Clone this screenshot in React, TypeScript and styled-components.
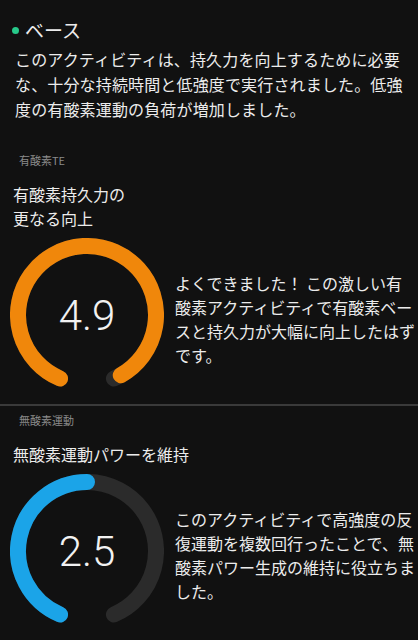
import styled, { createGlobalStyle } from "styled-components";

const GlobalStyle = createGlobalStyle`
  body {
    margin: 0;
    background: #111111;
    color: #ececec;
    font-family: "Noto Sans CJK JP", "Noto Sans", sans-serif;
  }
`;

const Page = styled.div`
  width: 418px;
  min-height: 640px;
  background: #111111;
`;

const Summary = styled.section`
  padding: 16px 10px 0 12px;
`;

const Heading = styled.h2`
  display: flex;
  align-items: center;
  gap: 6px;
  margin: 0;
  font-size: 19px;
  font-weight: 400;
  line-height: 28px;
`;

const Dot = styled.span`
  width: 7px;
  height: 7px;
  border-radius: 50%;
  background: #27c98a;
`;

const SummaryText = styled.p`
  margin: 3px 0 0 3px;
  font-size: 16px;
  line-height: 25px;
  letter-spacing: 0.15px;
`;

const Section = styled.section`
  padding-top: ${(p: { $top: number }) => p.$top}px;
`;

const Label = styled.div`
  padding-left: 19px;
  font-size: 11px;
  line-height: 16px;
  color: #8a8a8a;
`;

const Title = styled.div`
  margin-top: 14px;
  padding-left: 13px;
  font-size: 16px;
  line-height: 24px;
  white-space: pre-line;
`;

const Row = styled.div`
  display: flex;
  align-items: center;
  gap: 11px;
  margin-top: 8px;
  padding-left: 10px;
`;

const GaugeBox = styled.div`
  display: grid;
  place-items: center;
  width: 154px;
  height: 154px;
  flex: none;

  & > * {
    grid-area: 1 / 1;
  }
`;

const Value = styled.span`
  font-family: Roboto, "Liberation Sans", sans-serif;
  font-weight: 300;
  font-size: 42px;
  color: #f2f2f2;
`;

const Note = styled.p`
  margin: 0;
  padding-top: 8px;
  width: 243px;
  font-size: 16px;
  line-height: 24px;
`;

const Divider = styled.div`
  height: 2px;
  margin-top: 12px;
  background: #3a3a3a;
`;

const SIZE = 154;
const C = SIZE / 2;
const R = 69;
const GAP = 23;
const SWEEP = 360 - GAP * 2;

const point = (deg: number) => {
  const a = (deg * Math.PI) / 180;
  return [C + R * Math.sin(a), C - R * Math.cos(a)];
};

const arc = (from: number, to: number) => {
  const [x1, y1] = point(from);
  const [x2, y2] = point(to);
  const large = to - from > 180 ? 1 : 0;
  return `M ${x1.toFixed(2)} ${y1.toFixed(2)} A ${R} ${R} 0 ${large} 1 ${x2.toFixed(2)} ${y2.toFixed(2)}`;
};

const Gauge = ({ value, max, color }: { value: number; max: number; color: string }) => {
  const start = 180 + GAP;
  const end = start + (SWEEP * value) / max;
  return (
    <GaugeBox>
      <svg width={SIZE} height={SIZE} viewBox={`0 0 ${SIZE} ${SIZE}`}>
        <path d={arc(start, start + SWEEP)} fill="none" stroke="#2b2b2b" strokeWidth={16} strokeLinecap="round" />
        <path d={arc(start, end)} fill="none" stroke={color} strokeWidth={16} strokeLinecap="round" />
      </svg>
      <Value>{value.toFixed(1)}</Value>
    </GaugeBox>
  );
};

const App = () => {
  return (
    <Page>
      <GlobalStyle />
      <Summary>
        <Heading>
          <Dot />
          ベース
        </Heading>
        <SummaryText>
          このアクティビティは、持久力を向上するために必要な、十分な持続時間と低強度で実行されました。低強度の有酸素運動の負荷が増加しました。
        </SummaryText>
      </Summary>

      <Section $top={30}>
        <Label>有酸素TE</Label>
        <Title>{"有酸素持久力の\n更なる向上"}</Title>
        <Row>
          <Gauge value={4.9} max={5} color="#f0870b" />
          <Note>よくできました！ この激しい有酸素アクティビティで有酸素ベースと持久力が大幅に向上したはずです。</Note>
        </Row>
      </Section>

      <Divider />

      <Section $top={6}>
        <Label>無酸素運動</Label>
        <Title>無酸素運動パワーを維持</Title>
        <Row>
          <Gauge value={2.5} max={5} color="#1ba4e8" />
          <Note>このアクティビティで高強度の反復運動を複数回行ったことで、無酸素パワー生成の維持に役立ちました。</Note>
        </Row>
      </Section>
    </Page>
  );
};

export default App;
